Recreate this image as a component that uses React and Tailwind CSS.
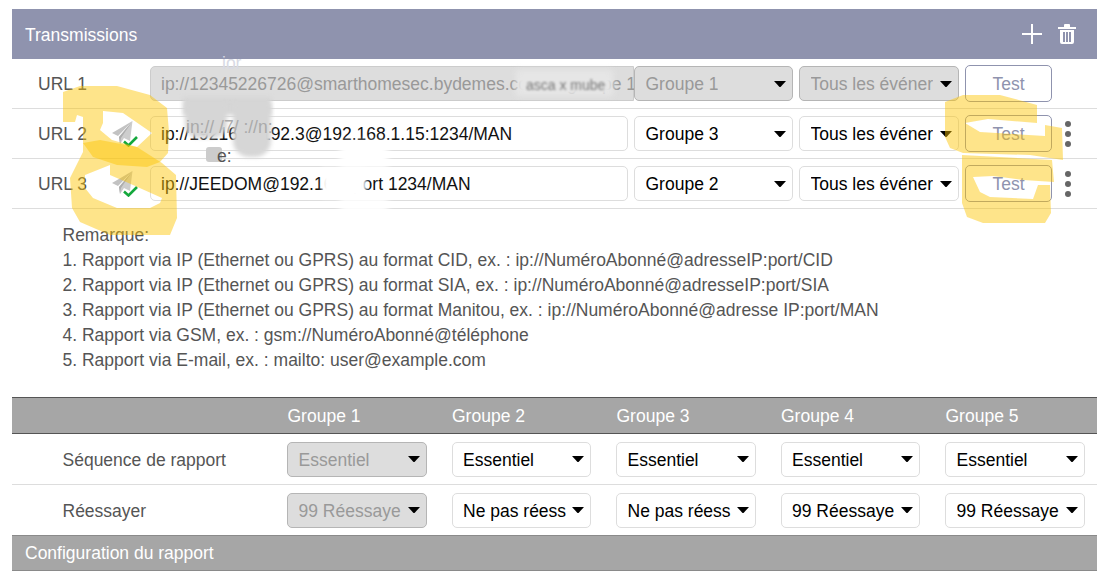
const font = { fontFamily: '"Liberation Sans", Arial, sans-serif' };

function Caret() {
  return (
    <svg width="12" height="6" viewBox="0 0 12 6" className="shrink-0">
      <path d="M0 0h12L6.5 6h-1z" fill="#000" />
    </svg>
  );
}

function Pick({ value, off, w = "w-[159px]" }) {
  return (
    <div
      className={`${w} h-[35px] shrink-0 flex items-center justify-between gap-1 pl-[10.5px] pr-[6px] rounded-[5px] border ${
        off ? "bg-[#dddddd] border-[#b5b5b5] text-[#999999]" : "bg-white border-[#dddddd] text-black"
      }`}
    >
      <span className="overflow-hidden whitespace-nowrap pt-[2px]">{value}</span>
      <Caret />
    </div>
  );
}

function SendIcon() {
  return (
    <div className="relative w-[28px] h-[28px]">
      <svg width="21" height="23" viewBox="0 0 21 23" className="absolute left-0 top-[1px]">
        <path d="M20.5 0L0 12l6 3z" fill="#c2c2c2" />
        <path d="M20.5 0L7 16l1 7 4-6 6 3z" fill="#cdcdcd" />
        <path d="M20.5 0L7 16l1 7 1-6z" fill="#aeaeae" />
      </svg>
      <svg width="15" height="11" viewBox="0 0 15 11" className="absolute left-[11px] top-[16px]">
        <path d="M1 5.5l4.5 4 8.5-8.5" fill="none" stroke="#14a83c" strokeWidth="2.6" />
      </svg>
    </div>
  );
}

function UrlRow({ label, value, group, off, dots, sent }) {
  return (
    <div className="h-[50px] flex items-center border-b border-[#dddddd]">
      <span className="w-[100px] pl-[26px] pt-[2px] shrink-0 text-[#555555]">{label}</span>
      <div className="w-[38px] shrink-0">{sent && <SendIcon />}</div>
      <div
        className={`h-[35px] shrink-0 flex items-center pl-[10px] whitespace-nowrap border ${
          off
            ? "w-[484px] rounded-l-[5px] bg-[#dddddd] border-[#cccccc] text-[#999999]"
            : "w-[478px] mr-[6px] rounded-[5px] bg-white border-[#dddddd] text-[#111111]"
        }`}
      >
        <span className="pt-[2px]">{value}</span>
      </div>
      <div className="flex gap-[6px]">
        <Pick value={group} off={off} />
        <Pick value="Tous les événer" off={off} w="w-[160px]" />
      </div>
      <button className="ml-[6px] w-[87px] h-[37px] pt-[2px] shrink-0 rounded-[5px] border border-[#8f93ae] bg-white text-[#8f93ae]">
        Test
      </button>
      {dots && (
        <div className="ml-[13px] flex flex-col gap-[4px]">
          <span className="w-[6px] h-[6px] rounded-full bg-[#666666]" />
          <span className="w-[6px] h-[6px] rounded-full bg-[#666666]" />
          <span className="w-[6px] h-[6px] rounded-full bg-[#666666]" />
        </div>
      )}
    </div>
  );
}

const notes = [
  "Remarque:",
  "1. Rapport via IP (Ethernet ou GPRS) au format CID, ex. : ip://NuméroAbonné@adresseIP:port/CID",
  "2. Rapport via IP (Ethernet ou GPRS) au format SIA, ex. : ip://NuméroAbonné@adresseIP:port/SIA",
  "3. Rapport via IP (Ethernet ou GPRS) au format Manitou, ex. : ip://NuméroAbonné@adresse IP:port/MAN",
  "4. Rapport via GSM, ex. : gsm://NuméroAbonné@téléphone",
  "5. Rapport via E-mail, ex. : mailto: user@example.com",
];

function GroupRow({ label, values, border }) {
  return (
    <div className={`flex items-center ${border ? "h-[51px] border-b border-[#dddddd]" : "h-[50px]"}`}>
      <span className="w-[275px] pl-[50.5px] pt-[2px] shrink-0 text-[#555555]">{label}</span>
      <div className="flex gap-[25px]">
        {values.map((v, i) => (
          <Pick key={i} value={v} off={i === 0} w="w-[139.5px]" />
        ))}
      </div>
    </div>
  );
}

const scribbles = [
  "63,92 80,86 117,86 150,95 167,108 169,132 168,153 160,162 147,167 117,165 93,157 83,143 83,117 77,115 75,122 63,122 M103,111 123,113 152,133 137,147 112,140 100,130 103,123",
  "83,143 100,140 137,147 162,163 176,175 177,218 170,235 110,235 80,222 72,208 70,178 83,152 M85,175 110,165 110,175 133,185 162,198 160,203 150,208 117,208 93,198 85,188",
  "945,102 963,95 1000,95 1037,105 1037,123 988,119 965,123 980,132 1045,136 1045,125 1062,128 1063,160 1030,155 963,153 950,148 945,137",
  "962,155 1052,160 1054,182 1023,180 993,176 973,177 980,192 990,197 1033,199 1038,185 1050,185 1051,213 1045,223 983,223 967,217 962,203",
];

// highlighter marks that were painted over the capture
function Marks() {
  return (
    <svg width="1109" height="571" className="absolute left-0 top-0 pointer-events-none">
      {scribbles.map((s, i) => (
        <path
          key={i}
          d={"M" + s.replace(/ M/g, "Z M") + "Z"}
          fill="#fdc400"
          fillOpacity="0.46"
          fillRule="evenodd"
        />
      ))}
    </svg>
  );
}

function Smudges() {
  return (
    <div className="absolute inset-0 pointer-events-none">
      <div className="absolute left-[183px] top-[97px] w-[88px] h-[18px] bg-[#d6d6d6] blur-[2px]" />
      <div className="absolute left-[185px] top-[103px] w-[42px] h-[35px] bg-[#d6d6d6] blur-[2px] rounded-b-[14px]" />
      <div className="absolute left-[233px] top-[103px] w-[38px] h-[54px] bg-[#d6d6d6] blur-[2px] rounded-b-[16px]" />
      <span className="absolute left-[186px] top-[115px] text-[#aaaaaa]">in:// /7/ ://n:</span>
      <div className="absolute left-[206px] top-[147px] w-[16px] h-[15px] bg-[#cccccc] rounded-[3px]" />
      <span className="absolute left-[217px] top-[144px] text-[#555555]">e:</span>
      <span className="absolute left-[222px] top-[51px] text-[#d8dae4]">ior</span>
      <div className="absolute left-[340px] top-[142px] w-[48px] h-[26px] bg-white blur-[3px]" />
      <div className="absolute left-[322px] top-[168px] w-[44px] h-[30px] bg-white blur-[2px]" />
      <div className="absolute left-[340px] top-[198px] w-[48px] h-[14px] bg-white blur-[3px]" />
      <div className="absolute left-[516px] top-[70px] w-[97px] h-[26px] bg-[#e6e6e6] blur-[3px]" />
      <span className="absolute left-[526px] top-[73px] text-[14px] text-[#777777] blur-[0.8px]">asca x mube</span>
    </div>
  );
}

export default function App() {
  return (
    <div style={font} className="relative w-[1109px] h-[571px] overflow-hidden bg-white text-[17.5px] leading-[25px]">
      <div className="px-3 pt-[9px]">
        <div className="h-[50px] bg-[#8f93ae] text-white flex items-center justify-between pl-[13px] pr-[21px]">
          <span className="pt-[2px]">Transmissions</span>
          <div className="flex items-center gap-[16px]">
            <svg width="20" height="20" viewBox="0 0 20 20">
              <path d="M10 0v20M0 10h20" stroke="#fff" strokeWidth="2" />
            </svg>
            <svg width="18" height="20" viewBox="0 0 18 20">
              <path
                d="M0 3h18v2H0zM6 1q0-1 1-1h4q1 0 1 1v2H6zM2 6h14v12q0 2-2 2H4q-2 0-2-2zM5 8v10h2V8zM8 8v10h2V8zM11 8v10h2V8z"
                fill="#fff"
                fillRule="evenodd"
              />
            </svg>
          </div>
        </div>

        <UrlRow label="URL 1" off group="Groupe 1" value="ip://12345226726@smarthomesec.bydemes.com.1: groupe 1" />
        <UrlRow label="URL 2" dots sent group="Groupe 3" value="ip://192168.1192.3@192.168.1.15:1234/MAN" />
        <UrlRow label="URL 3" dots sent group="Groupe 2" value="ip://JEEDOM@192.168. port 1234/MAN" />

        <div className="pl-[50.5px] pt-[14px] h-[188px] text-[#555555]">
          {notes.map((n) => (
            <div key={n} className="h-[25px] whitespace-nowrap">{n}</div>
          ))}
        </div>

        <div className="h-[37px] bg-[#a6a6a6] border-y border-[#555555] text-white flex items-center pl-[275.5px] gap-[25px]">
          {[1, 2, 3, 4, 5].map((n) => (
            <span key={n} className="w-[139.5px] pt-[2px] shrink-0">Groupe {n}</span>
          ))}
        </div>
        <GroupRow border label="Séquence de rapport" values={["Essentiel", "Essentiel", "Essentiel", "Essentiel", "Essentiel"]} />
        <GroupRow label="Réessayer" values={["99 Réessaye", "Ne pas réess", "Ne pas réess", "99 Réessaye", "99 Réessaye"]} />
        <div className="h-[36px] bg-[#a6a6a6] border-y border-[#8a8a8a] text-white flex items-center pl-[13px]">
          Configuration du rapport
        </div>
      </div>
      <Smudges />
      <Marks />
    </div>
  );
}
